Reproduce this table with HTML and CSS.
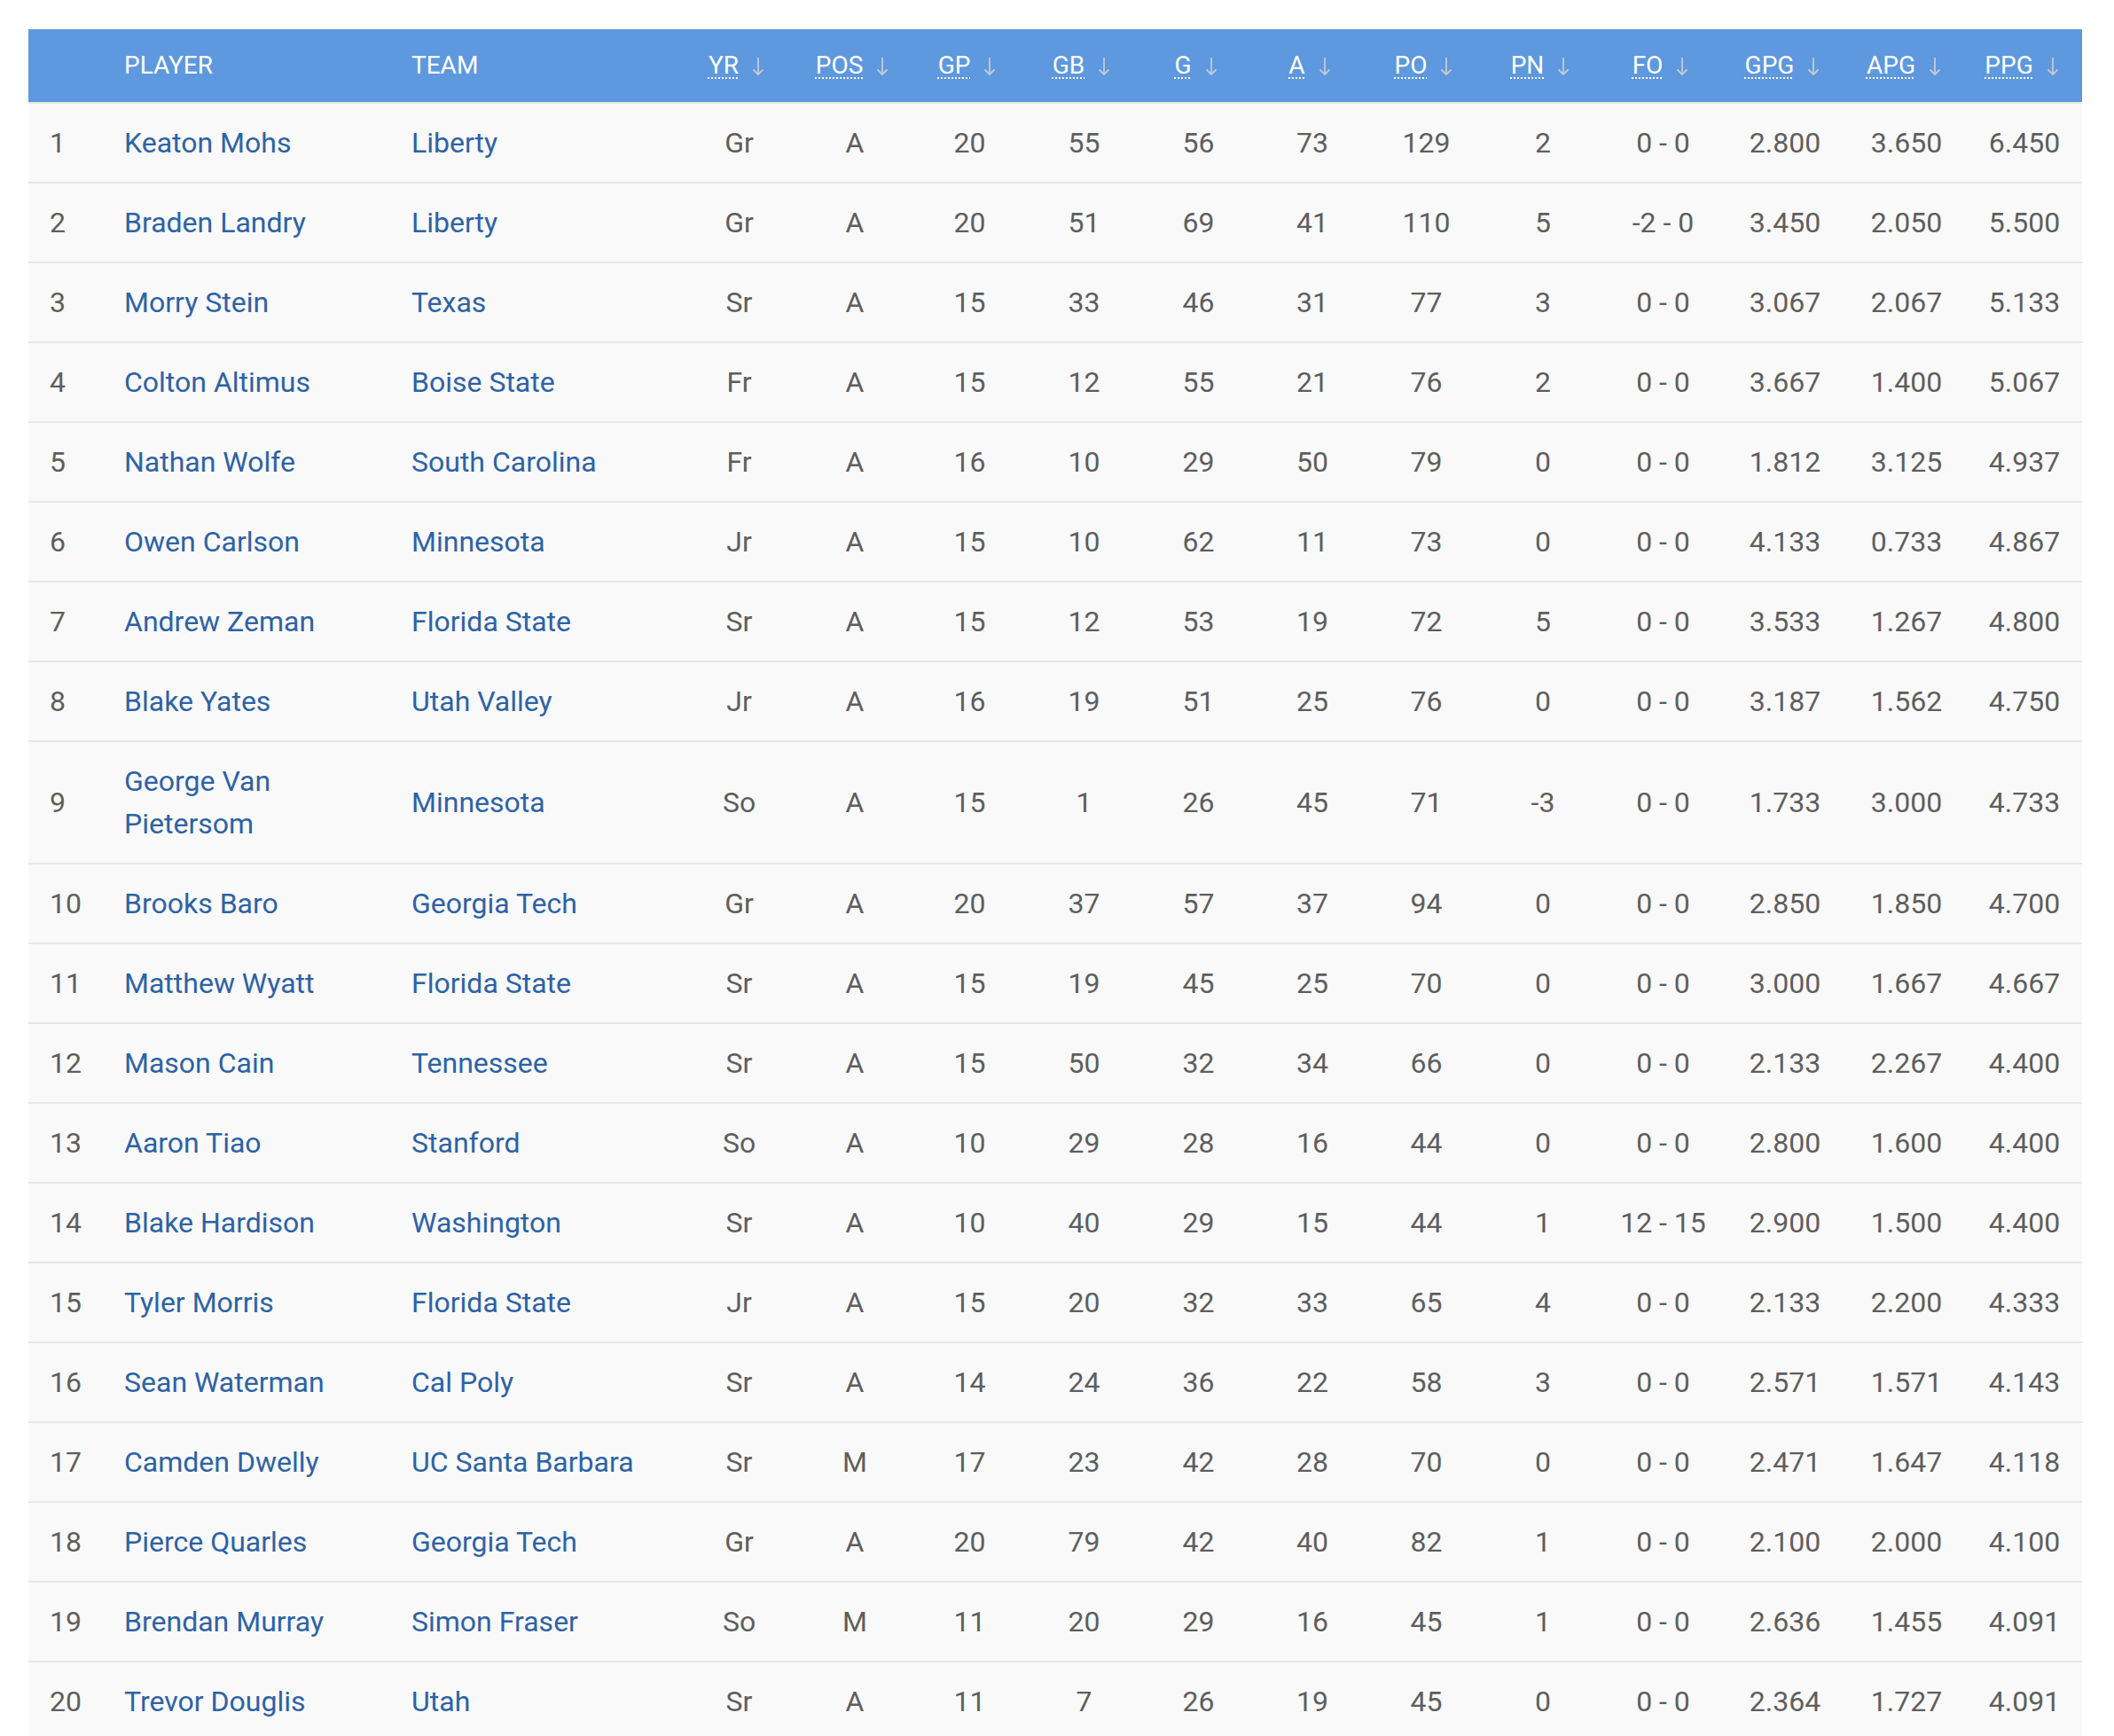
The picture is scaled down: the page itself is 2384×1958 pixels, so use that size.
FILE: index.html
```html
<!DOCTYPE html>
<html lang="en">
<head>
<meta charset="utf-8">
<title>Player Stats</title>
<link rel="stylesheet" href="styles.css">
</head>
<body>
<div class="page">
<table class="stats">
  <colgroup>
    <col class="c-rank"><col class="c-player"><col class="c-team">
    <col class="c-yr"><col class="c-pos"><col class="c-gp"><col class="c-gb">
    <col class="c-g"><col class="c-a"><col class="c-po"><col class="c-pn">
    <col class="c-fo"><col class="c-gpg"><col class="c-apg"><col class="c-ppg">
  </colgroup>
  <thead>
    <tr>
      <th class="left"></th>
      <th class="left">Player</th>
      <th class="left">Team</th>
      <th><abbr title="Year">YR</abbr><svg class="sort" viewBox="0 0 14 22"><path d="M7 1V20M1.5 14.5L7 20L12.5 14.5"/></svg></th>
      <th><abbr title="Position">POS</abbr><svg class="sort" viewBox="0 0 14 22"><path d="M7 1V20M1.5 14.5L7 20L12.5 14.5"/></svg></th>
      <th><abbr title="Games Played">GP</abbr><svg class="sort" viewBox="0 0 14 22"><path d="M7 1V20M1.5 14.5L7 20L12.5 14.5"/></svg></th>
      <th><abbr title="Ground Balls">GB</abbr><svg class="sort" viewBox="0 0 14 22"><path d="M7 1V20M1.5 14.5L7 20L12.5 14.5"/></svg></th>
      <th><abbr title="Goals">G</abbr><svg class="sort" viewBox="0 0 14 22"><path d="M7 1V20M1.5 14.5L7 20L12.5 14.5"/></svg></th>
      <th><abbr title="Assists">A</abbr><svg class="sort" viewBox="0 0 14 22"><path d="M7 1V20M1.5 14.5L7 20L12.5 14.5"/></svg></th>
      <th><abbr title="Points">PO</abbr><svg class="sort" viewBox="0 0 14 22"><path d="M7 1V20M1.5 14.5L7 20L12.5 14.5"/></svg></th>
      <th><abbr title="Penalties">PN</abbr><svg class="sort" viewBox="0 0 14 22"><path d="M7 1V20M1.5 14.5L7 20L12.5 14.5"/></svg></th>
      <th><abbr title="Faceoffs">FO</abbr><svg class="sort" viewBox="0 0 14 22"><path d="M7 1V20M1.5 14.5L7 20L12.5 14.5"/></svg></th>
      <th><abbr title="Goals Per Game">GPG</abbr><svg class="sort" viewBox="0 0 14 22"><path d="M7 1V20M1.5 14.5L7 20L12.5 14.5"/></svg></th>
      <th><abbr title="Assists Per Game">APG</abbr><svg class="sort" viewBox="0 0 14 22"><path d="M7 1V20M1.5 14.5L7 20L12.5 14.5"/></svg></th>
      <th><abbr title="Points Per Game">PPG</abbr><svg class="sort" viewBox="0 0 14 22"><path d="M7 1V20M1.5 14.5L7 20L12.5 14.5"/></svg></th>
    </tr>
  </thead>
  <tbody>
    <tr><td class="rank">1</td><td class="left"><a href="#">Keaton Mohs</a></td><td class="left"><a href="#">Liberty</a></td><td>Gr</td><td>A</td><td>20</td><td>55</td><td>56</td><td>73</td><td>129</td><td>2</td><td>0 - 0</td><td>2.800</td><td>3.650</td><td>6.450</td></tr>
    <tr><td class="rank">2</td><td class="left"><a href="#">Braden Landry</a></td><td class="left"><a href="#">Liberty</a></td><td>Gr</td><td>A</td><td>20</td><td>51</td><td>69</td><td>41</td><td>110</td><td>5</td><td>-2 - 0</td><td>3.450</td><td>2.050</td><td>5.500</td></tr>
    <tr><td class="rank">3</td><td class="left"><a href="#">Morry Stein</a></td><td class="left"><a href="#">Texas</a></td><td>Sr</td><td>A</td><td>15</td><td>33</td><td>46</td><td>31</td><td>77</td><td>3</td><td>0 - 0</td><td>3.067</td><td>2.067</td><td>5.133</td></tr>
    <tr><td class="rank">4</td><td class="left"><a href="#">Colton Altimus</a></td><td class="left"><a href="#">Boise State</a></td><td>Fr</td><td>A</td><td>15</td><td>12</td><td>55</td><td>21</td><td>76</td><td>2</td><td>0 - 0</td><td>3.667</td><td>1.400</td><td>5.067</td></tr>
    <tr><td class="rank">5</td><td class="left"><a href="#">Nathan Wolfe</a></td><td class="left"><a href="#">South Carolina</a></td><td>Fr</td><td>A</td><td>16</td><td>10</td><td>29</td><td>50</td><td>79</td><td>0</td><td>0 - 0</td><td>1.812</td><td>3.125</td><td>4.937</td></tr>
    <tr><td class="rank">6</td><td class="left"><a href="#">Owen Carlson</a></td><td class="left"><a href="#">Minnesota</a></td><td>Jr</td><td>A</td><td>15</td><td>10</td><td>62</td><td>11</td><td>73</td><td>0</td><td>0 - 0</td><td>4.133</td><td>0.733</td><td>4.867</td></tr>
    <tr><td class="rank">7</td><td class="left"><a href="#">Andrew Zeman</a></td><td class="left"><a href="#">Florida State</a></td><td>Sr</td><td>A</td><td>15</td><td>12</td><td>53</td><td>19</td><td>72</td><td>5</td><td>0 - 0</td><td>3.533</td><td>1.267</td><td>4.800</td></tr>
    <tr><td class="rank">8</td><td class="left"><a href="#">Blake Yates</a></td><td class="left"><a href="#">Utah Valley</a></td><td>Jr</td><td>A</td><td>16</td><td>19</td><td>51</td><td>25</td><td>76</td><td>0</td><td>0 - 0</td><td>3.187</td><td>1.562</td><td>4.750</td></tr>
    <tr><td class="rank">9</td><td class="left"><a href="#">George Van Pietersom</a></td><td class="left"><a href="#">Minnesota</a></td><td>So</td><td>A</td><td>15</td><td>1</td><td>26</td><td>45</td><td>71</td><td>-3</td><td>0 - 0</td><td>1.733</td><td>3.000</td><td>4.733</td></tr>
    <tr><td class="rank">10</td><td class="left"><a href="#">Brooks Baro</a></td><td class="left"><a href="#">Georgia Tech</a></td><td>Gr</td><td>A</td><td>20</td><td>37</td><td>57</td><td>37</td><td>94</td><td>0</td><td>0 - 0</td><td>2.850</td><td>1.850</td><td>4.700</td></tr>
    <tr><td class="rank">11</td><td class="left"><a href="#">Matthew Wyatt</a></td><td class="left"><a href="#">Florida State</a></td><td>Sr</td><td>A</td><td>15</td><td>19</td><td>45</td><td>25</td><td>70</td><td>0</td><td>0 - 0</td><td>3.000</td><td>1.667</td><td>4.667</td></tr>
    <tr><td class="rank">12</td><td class="left"><a href="#">Mason Cain</a></td><td class="left"><a href="#">Tennessee</a></td><td>Sr</td><td>A</td><td>15</td><td>50</td><td>32</td><td>34</td><td>66</td><td>0</td><td>0 - 0</td><td>2.133</td><td>2.267</td><td>4.400</td></tr>
    <tr><td class="rank">13</td><td class="left"><a href="#">Aaron Tiao</a></td><td class="left"><a href="#">Stanford</a></td><td>So</td><td>A</td><td>10</td><td>29</td><td>28</td><td>16</td><td>44</td><td>0</td><td>0 - 0</td><td>2.800</td><td>1.600</td><td>4.400</td></tr>
    <tr><td class="rank">14</td><td class="left"><a href="#">Blake Hardison</a></td><td class="left"><a href="#">Washington</a></td><td>Sr</td><td>A</td><td>10</td><td>40</td><td>29</td><td>15</td><td>44</td><td>1</td><td>12 - 15</td><td>2.900</td><td>1.500</td><td>4.400</td></tr>
    <tr><td class="rank">15</td><td class="left"><a href="#">Tyler Morris</a></td><td class="left"><a href="#">Florida State</a></td><td>Jr</td><td>A</td><td>15</td><td>20</td><td>32</td><td>33</td><td>65</td><td>4</td><td>0 - 0</td><td>2.133</td><td>2.200</td><td>4.333</td></tr>
    <tr><td class="rank">16</td><td class="left"><a href="#">Sean Waterman</a></td><td class="left"><a href="#">Cal Poly</a></td><td>Sr</td><td>A</td><td>14</td><td>24</td><td>36</td><td>22</td><td>58</td><td>3</td><td>0 - 0</td><td>2.571</td><td>1.571</td><td>4.143</td></tr>
    <tr><td class="rank">17</td><td class="left"><a href="#">Camden Dwelly</a></td><td class="left"><a href="#">UC Santa Barbara</a></td><td>Sr</td><td>M</td><td>17</td><td>23</td><td>42</td><td>28</td><td>70</td><td>0</td><td>0 - 0</td><td>2.471</td><td>1.647</td><td>4.118</td></tr>
    <tr><td class="rank">18</td><td class="left"><a href="#">Pierce Quarles</a></td><td class="left"><a href="#">Georgia Tech</a></td><td>Gr</td><td>A</td><td>20</td><td>79</td><td>42</td><td>40</td><td>82</td><td>1</td><td>0 - 0</td><td>2.100</td><td>2.000</td><td>4.100</td></tr>
    <tr><td class="rank">19</td><td class="left"><a href="#">Brendan Murray</a></td><td class="left"><a href="#">Simon Fraser</a></td><td>So</td><td>M</td><td>11</td><td>20</td><td>29</td><td>16</td><td>45</td><td>1</td><td>0 - 0</td><td>2.636</td><td>1.455</td><td>4.091</td></tr>
    <tr><td class="rank">20</td><td class="left"><a href="#">Trevor Douglis</a></td><td class="left"><a href="#">Utah</a></td><td>Sr</td><td>A</td><td>11</td><td>7</td><td>26</td><td>19</td><td>45</td><td>0</td><td>0 - 0</td><td>2.364</td><td>1.727</td><td>4.091</td></tr>
  </tbody>
</table>
</div>
</body>
</html>
```

FILE: styles.css
```css
html, body {
  margin: 0;
  padding: 0;
  background: #ffffff;
}

body {
  font-family: Roboto, "Liberation Sans", Arial, sans-serif;
  color: #5e5e5e;
}

.page {
  padding: 33px 36px 0 32px;
}

.stats {
  width: 2316px;
  table-layout: fixed;
  border-collapse: collapse;
  border-spacing: 0;
}

.c-rank { width: 84px; }
.c-player { width: 324px; }
.c-team { width: 328px; }
.c-yr { width: 131px; }
.c-pos { width: 130px; }
.c-gp { width: 129px; }
.c-gb { width: 129px; }
.c-g { width: 129px; }
.c-a { width: 128px; }
.c-po { width: 129px; }
.c-pn { width: 134px; }
.c-fo { width: 137px; }
.c-gpg { width: 138px; }
.c-apg { width: 136px; }
.c-ppg { width: 130px; }

.stats th {
  background: #5e98de;
  color: #ffffff;
  font-weight: 400;
  font-size: 28px;
  line-height: 48px;
  text-transform: uppercase;
  padding: 17px 13px 17px 7px;
  text-align: center;
  white-space: nowrap;
  border-bottom: 2px solid #e7e7e7;
}

.stats th.left {
  text-align: left;
  padding-left: 24px;
}

.stats abbr {
  text-decoration: underline dotted #ffffff;
  text-decoration-thickness: 2px;
  text-underline-offset: 4px;
}

.sort {
  display: inline-block;
  width: 14px;
  height: 22px;
  margin-left: 15px;
  vertical-align: -3px;
  fill: none;
  stroke: #c6cbd2;
  stroke-width: 1.8;
}

.stats tbody tr {
  background: #f9f9f9;
}

.stats td {
  font-size: 32px;
  line-height: 48px;
  padding: 20px 10px;
  text-align: center;
  border-bottom: 2px solid #e7e7e7;
  vertical-align: middle;
}

.stats td.left {
  text-align: left;
  padding-left: 24px;
  padding-right: 24px;
}

.stats td.rank {
  text-align: left;
  padding-left: 24px;
}

.stats a {
  color: #2d62a6;
  text-decoration: none;
}
```
